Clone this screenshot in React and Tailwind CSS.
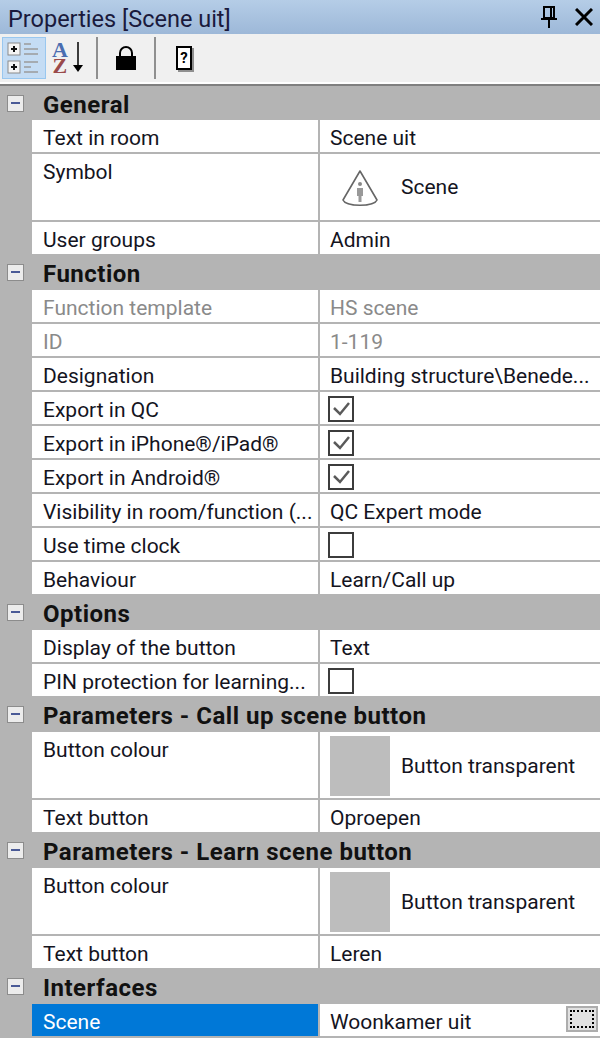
const font = { fontFamily: 'Roboto, "Open Sans", sans-serif' };

function CheckBox({ checked }) {
  return (
    <div className="w-[26px] h-[26px] border-2 border-[#3c3c3c] bg-white shrink-0">
      {checked && (
        <svg width="22" height="22" viewBox="0 0 22 22" fill="none">
          <path d="M4 10l6 6 9-11" stroke="#5a5a5a" strokeWidth="2.5" />
        </svg>
      )}
    </div>
  );
}

function Row({ label, value, h = 'h-[34px]', line = true, muted, children }) {
  const color = muted ? 'text-[#8a8a8a]' : 'text-[#14141e]';
  return (
    <div className={`flex ${h} bg-white ${line ? 'border-b-2 border-[#b4b4b4]' : ''}`}>
      <div className="w-8 bg-[#b4b4b4] shrink-0" />
      <div className={`w-[286px] shrink-0 pl-[11px] pt-[3px] leading-[30px] whitespace-nowrap overflow-hidden ${color}`}>
        {label}
      </div>
      <div className="w-[2px] bg-[#b4b4b4] shrink-0" />
      <div className={`flex-1 min-w-0 pl-[10px] pt-[3px] leading-[30px] whitespace-nowrap overflow-hidden ${color}`}>
        {value}
        {children}
      </div>
    </div>
  );
}

function Toggle() {
  return (
    <div className="w-8 shrink-0 flex justify-center pr-[2px]">
      <div className="w-[17px] h-[17px] border border-[#8c8c8c] bg-[#ececec] flex items-center justify-center">
        <div className="w-[9px] h-[2px] bg-[#4a5a96]" />
      </div>
    </div>
  );
}

function Header({ title, h = 'h-9' }) {
  return (
    <div className={`flex ${h} bg-[#b4b4b4] items-center`}>
      <Toggle />
      <div className="pl-[11px] pt-[3px] font-bold text-[24px] leading-[30px] tracking-[0.5px] text-[#111]">{title}</div>
    </div>
  );
}

function Swatch({ label }) {
  return (
    <div className="flex items-center h-[60px] mt-px">
      <div className="w-[60px] h-[60px] bg-[#bdbdbd] shrink-0" />
      <span className="ml-[11px]">{label}</span>
    </div>
  );
}

function CheckRow({ label, checked, line = true }) {
  return (
    <div className={`flex h-[34px] bg-white ${line ? 'border-b-2 border-[#b4b4b4]' : ''}`}>
      <div className="w-8 bg-[#b4b4b4] shrink-0" />
      <div className="w-[286px] shrink-0 pl-[11px] pt-[3px] leading-[30px] whitespace-nowrap overflow-hidden text-[#14141e]">{label}</div>
      <div className="w-[2px] bg-[#b4b4b4] shrink-0" />
      <div className="flex-1 pl-2 pt-1">
        <CheckBox checked={checked} />
      </div>
    </div>
  );
}

function CategoryIcon() {
  return (
    <svg width="34" height="34" viewBox="0 0 34 34" fill="none">
      <rect x="1" y="2" width="12" height="12" fill="#f4f4f4" stroke="#8a8a8a" />
      <path d="M4 8h6M7 5v6" stroke="#111" strokeWidth="2" />
      <rect x="1" y="20" width="12" height="12" fill="#f4f4f4" stroke="#8a8a8a" />
      <path d="M4 26h6M7 23v6" stroke="#111" strokeWidth="2" />
      <path d="M17 3h7M17 8h14M17 13h14M17 21h14M17 26h7M17 31h14" stroke="#9a9a9a" strokeWidth="1.5" />
    </svg>
  );
}

function SceneIcon() {
  return (
    <svg width="38" height="38" viewBox="0 0 38 38" fill="none">
      <path d="M19 1L2 30c3 7 31 7 34 0L19 1z" stroke="#666" strokeWidth="1.6" strokeLinejoin="round" />
      <circle cx="19" cy="14" r="2" fill="#888" />
      <path d="M16 18h6v8h-1.500v6h-3v-6H16z" fill="#999" />
    </svg>
  );
}

export default function App() {
  return (
    <div className="w-[600px] h-[1044px] bg-white overflow-hidden text-[21px]" style={font}>
      <div className="h-[34px] flex items-center justify-between pl-2 pr-[7px] bg-gradient-to-b from-[#b5cde7] to-[#9db8d8] text-[#1a1a3c]">
        <span className="text-[23.5px] leading-[30px] pt-[3px]">Properties [Scene uit]</span>
        <div className="flex items-center gap-[18px]">
          <svg width="16" height="22" viewBox="0 0 16 22" fill="none">
            <path d="M3 1h10v11H3z M10 2v10" stroke="#000" strokeWidth="2" />
            <path d="M0 13h16M8 13v9" stroke="#000" strokeWidth="2" />
          </svg>
          <svg width="18" height="18" viewBox="0 0 18 18" fill="none">
            <path d="M1 1l16 16M17 1L1 17" stroke="#000" strokeWidth="3" />
          </svg>
        </div>
      </div>

      <div className="h-12 bg-[#f0f0f0] flex items-center pl-[2px]">
        <div className="w-11 h-[42px] bg-[#c4dcf4] border border-[#99c7ef] flex items-center justify-center">
          <CategoryIcon />
        </div>
        <div className="w-[50px] h-[42px] flex items-center pl-[6px]">
          <div className="flex flex-col items-center leading-[16px] text-[22px] font-bold" style={{ fontFamily: '"Liberation Serif", serif' }}>
            <span className="text-[#4a6db0]">A</span>
            <span className="text-[#9a4a4a]">Z</span>
          </div>
          <svg width="14" height="32" viewBox="0 0 14 32" fill="none" className="ml-[3px]">
            <path d="M7 0v24" stroke="#000" strokeWidth="1.5" />
            <path d="M2 23h10l-5 7z" fill="#000" />
          </svg>
        </div>
        <div className="w-[2px] h-[42px] bg-[#8f8f8f]" />
        <div className="w-[56px] flex justify-center">
          <svg width="22" height="26" viewBox="0 0 22 26" fill="none">
            <path d="M5 12V8a6 6 0 0 1 12 0v4" stroke="#000" strokeWidth="2" />
            <rect x="1" y="11" width="20" height="14" fill="#000" />
          </svg>
        </div>
        <div className="w-[2px] h-[42px] bg-[#8f8f8f]" />
        <div className="w-[56px] flex justify-center">
          <div className="w-[16px] h-[24px] bg-white border-2 border-black shadow-[2px_2px_0_#8f8f8f] flex items-center justify-center text-[15px] font-bold leading-none text-black">?</div>
        </div>
      </div>

      <div className="h-[2px] bg-white" />
      <div className="h-[2px] bg-[#808080]" />

      <Header title="General" h="h-[34px]" />
      <Row label="Text in room" value="Scene uit" />
      <Row label="Symbol" h="h-[68px]">
        <div className="flex items-center h-[60px]">
          <div className="ml-[11px] mt-[3px] shrink-0">
            <SceneIcon />
          </div>
          <span className="ml-[22px]">Scene</span>
        </div>
      </Row>
      <Row label="User groups" value="Admin" h="h-8" line={false} />

      <Header title="Function" />
      <Row label="Function template" value="HS scene" muted />
      <Row label="ID" value="1-119" muted />
      <Row label="Designation" value="Building structure\Benede..." />
      <CheckRow label="Export in QC" checked />
      <CheckRow label="Export in iPhone®/iPad®" checked />
      <CheckRow label="Export in Android®" checked />
      <Row label="Visibility in room/function (..." value="QC Expert mode" />
      <CheckRow label="Use time clock" />
      <Row label="Behaviour" value="Learn/Call up" h="h-8" line={false} />

      <Header title="Options" />
      <Row label="Display of the button" value="Text" />
      <div className="h-8 overflow-hidden">
        <CheckRow label="PIN protection for learning..." line={false} />
      </div>

      <Header title="Parameters - Call up scene button" />
      <Row label="Button colour" h="h-[68px]">
        <Swatch label="Button transparent" />
      </Row>
      <Row label="Text button" value="Oproepen" h="h-8" line={false} />

      <Header title="Parameters - Learn scene button" />
      <Row label="Button colour" h="h-[68px]">
        <Swatch label="Button transparent" />
      </Row>
      <Row label="Text button" value="Leren" h="h-8" line={false} />

      <Header title="Interfaces" />
      <div className="flex h-[34px] bg-white border-b-2 border-[#b4b4b4]">
        <div className="w-8 bg-[#b4b4b4] shrink-0" />
        <div className="w-[286px] shrink-0 pl-[11px] pt-[3px] leading-[30px] bg-[#0078d7] text-white">Scene</div>
        <div className="w-[2px] bg-[#b4b4b4] shrink-0" />
        <div className="flex-1 pl-[10px] pr-[2px] pt-[3px] leading-[30px] flex justify-between text-[#14141e]">
          <span>Woonkamer uit</span>
          <div className="w-8 h-[26px] -mt-[1px] bg-[#e1e1e1] border-2 border-[#adadad] p-[2px]">
            <div className="w-full h-full border-2 border-dotted border-black" />
          </div>
        </div>
      </div>
    </div>
  );
}
